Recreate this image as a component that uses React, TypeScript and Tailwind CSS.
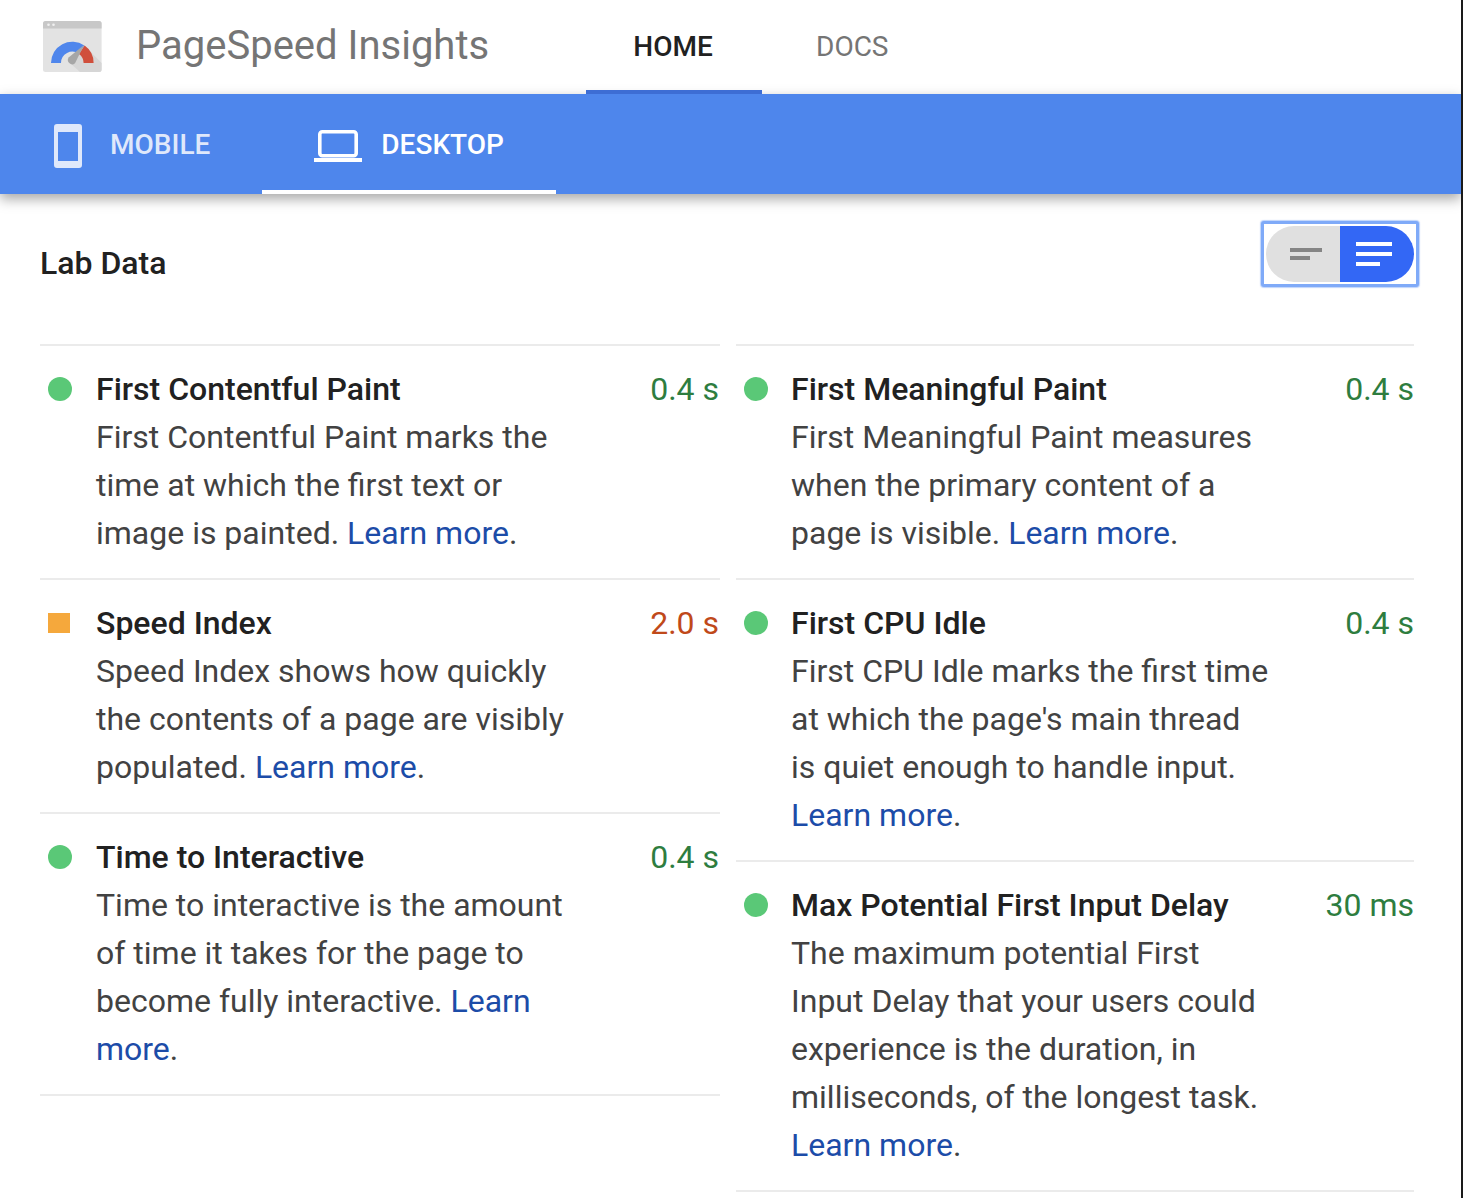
import React from 'react';

const FONT = 'font-[Roboto,"Liberation_Sans",sans-serif]';

type Status = 'pass' | 'average';

interface Metric {
  title: string;
  value: string;
  status: Status;
  lines: string[];
  // text before the link on the link's line, and link split over lines when needed
  linkPrefix?: string;
  linkParts: string[];
}

const LEFT: Metric[] = [
  {
    title: 'First Contentful Paint',
    value: '0.4 s',
    status: 'pass',
    lines: ['First Contentful Paint marks the', 'time at which the first text or'],
    linkPrefix: 'image is painted. ',
    linkParts: ['Learn more'],
  },
  {
    title: 'Speed Index',
    value: '2.0 s',
    status: 'average',
    lines: ['Speed Index shows how quickly', 'the contents of a page are visibly'],
    linkPrefix: 'populated. ',
    linkParts: ['Learn more'],
  },
  {
    title: 'Time to Interactive',
    value: '0.4 s',
    status: 'pass',
    lines: ['Time to interactive is the amount', 'of time it takes for the page to'],
    linkPrefix: 'become fully interactive. ',
    linkParts: ['Learn', 'more'],
  },
];

const RIGHT: Metric[] = [
  {
    title: 'First Meaningful Paint',
    value: '0.4 s',
    status: 'pass',
    lines: ['First Meaningful Paint measures', 'when the primary content of a'],
    linkPrefix: 'page is visible. ',
    linkParts: ['Learn more'],
  },
  {
    title: 'First CPU Idle',
    value: '0.4 s',
    status: 'pass',
    lines: [
      'First CPU Idle marks the first time',
      "at which the page's main thread",
      'is quiet enough to handle input.',
    ],
    linkParts: ['Learn more'],
  },
  {
    title: 'Max Potential First Input Delay',
    value: '30 ms',
    status: 'pass',
    lines: [
      'The maximum potential First',
      'Input Delay that your users could',
      'experience is the duration, in',
      'milliseconds, of the longest task.',
    ],
    linkParts: ['Learn more'],
  },
];

function Logo() {
  return (
    <svg width="59" height="51" viewBox="0 0 59 51" className="mb-[1px] shrink-0">
      <rect x="0" y="0" width="58.600" height="51" rx="2.500" fill="#e3e3e3" />
      <path d="M2.500 0h53.600a2.500 2.500 0 0 1 2.500 2.500V7.600H0V2.500A2.500 2.500 0 0 1 2.500 0z" fill="#c8c8c8" />
      <circle cx="5.500" cy="3.800" r="1.300" fill="#f1f1f1" />
      <circle cx="10.500" cy="3.800" r="1.300" fill="#f1f1f1" />
      <path d="M41 24L58.600 42V48.500A2.500 2.500 0 0 1 56.100 51H37L27 42z" fill="#d6d6d6" />
      <path d="M8 42A21.300 21.300 0 0 1 41.300 24.400L35.700 32.700A11.300 11.300 0 0 0 18 42z" fill="#4f86ec" />
      <path d="M41.600 24.600A21.300 21.300 0 0 1 50.600 42H40.600A11.300 11.300 0 0 0 36 32.900z" fill="#d04f3c" />
      <path d="M41 24L25.900 36.300a4.300 4.300 0 0 0 6.100 6z" fill="#a6a6a6" />
    </svg>
  );
}

function MobileIcon() {
  return (
    <svg width="28" height="44" viewBox="0 0 28 44" className="mt-[2px]">
      <path
        fillRule="evenodd"
        d="M3 0h22a3 3 0 0 1 3 3v38a3 3 0 0 1-3 3H3a3 3 0 0 1-3-3V3a3 3 0 0 1 3-3zm1 8v29h20V8z"
        fill="#dfe8fb"
      />
    </svg>
  );
}

function LaptopIcon() {
  return (
    <svg width="48" height="32" viewBox="0 0 48 32" className="mt-[2px]">
      <rect x="5.800" y="1.800" width="36.400" height="24" rx="2.500" fill="none" stroke="#fff" strokeWidth="3.600" />
      <rect x="0" y="28" width="48" height="4" fill="#fff" />
    </svg>
  );
}

function ViewToggle() {
  return (
    <div className="my-[1px] mr-[2px] flex h-[66px] w-[158px] items-center justify-center rounded-[3px] border-[3px] border-[#7faaf8] bg-white shadow-[0_0_1px_1px_rgba(127,170,248,0.5)]">
      <div className="flex h-[56px] w-[148px] shrink-0 overflow-hidden rounded-full">
        <div className="flex w-[74px] flex-col items-center justify-center gap-[4px] bg-[#e0e0e0] pl-[6px]">
          <span className="block h-[4px] w-[32px] bg-[#858585]" />
          <span className="mr-[12px] block h-[4px] w-[20px] bg-[#858585]" />
        </div>
        <div className="flex w-[74px] flex-col items-start justify-center gap-[6px] bg-[#3367f5] pl-[16px]">
          <span className="block h-[4px] w-[36px] bg-white" />
          <span className="block h-[4px] w-[36px] bg-white" />
          <span className="block h-[4px] w-[24px] bg-white" />
        </div>
      </div>
    </div>
  );
}

function MetricRow({ metric, indent, valueClass }: { metric: Metric; indent: string; valueClass: string }) {
  const valueColor = metric.status === 'pass' ? 'text-[#2e7d3f]' : 'text-[#c0491a]';
  const last = metric.linkParts.length - 1;
  return (
    <div className="flex border-b-2 border-[#ebebeb] pb-[21px] pt-[19px]">
      <div className={`flex h-[48px] ${indent} shrink-0 items-center pl-[8px]`}>
        {metric.status === 'pass' ? (
          <span className="block h-[24px] w-[24px] rounded-full bg-[#5ac877]" />
        ) : (
          <span className="block h-[20px] w-[22px] bg-[#f5a83c]" />
        )}
      </div>
      <div className="min-w-0 flex-1 text-[32px] leading-[48px]">
        <div className="flex justify-between">
          <span className="whitespace-nowrap font-medium text-[#212121]">{metric.title}</span>
          <span className={`${valueColor} ${valueClass} whitespace-nowrap text-right`}>{metric.value}</span>
        </div>
        <div className="whitespace-nowrap text-[#424242]">
          {metric.lines.map((line) => (
            <div key={line}>{line}</div>
          ))}
          {metric.linkParts.map((part, i) => (
            <div key={part}>
              {i === 0 && metric.linkPrefix}
              <span className="text-[#1c4ca8]">{part}</span>
              {i === last && '.'}
            </div>
          ))}
        </div>
      </div>
    </div>
  );
}

export default function App() {
  return (
    <div className={`${FONT} h-[1198px] w-[1463px] overflow-hidden border-r-2 border-[#1a1a1a] bg-white`}>
      <header className="flex h-[94px] items-center pl-[43px]">
        <Logo />
        <span className="mb-[3px] ml-[34px] w-[450px] text-[40px] leading-none text-[#757575]">PageSpeed Insights</span>
        <nav className="flex h-full text-[28px] font-medium">
          <div className="flex h-full w-[176px] items-center justify-center border-b-4 border-[#3d6dd4] pr-[2px] pt-[4px] text-[#212121]">
            HOME
          </div>
          <div className="ml-[54px] flex h-full items-center font-normal text-[#757575]">DOCS</div>
        </nav>
      </header>

      <div className="flex h-[100px] bg-[#4e86ec] pl-[54px] text-[28px] font-medium shadow-[0_5px_12px_rgba(0,0,0,0.35)]">
        <div className="flex items-center pt-[2px] text-[#dfe8fb]">
          <MobileIcon />
          <span className="ml-[28px]">MOBILE</span>
        </div>
        <div className="ml-[52px] flex w-[294px] items-center border-b-4 border-white pl-[52px] pt-[6px] text-white">
          <LaptopIcon />
          <span className="ml-[19px]">DESKTOP</span>
        </div>
      </div>

      <div className="flex items-center justify-between px-[40px] pt-[26px]">
        <span className="pt-[18px] text-[32px] font-medium text-[#212121]">Lab Data</span>
        <ViewToggle />
      </div>

      <div className="mt-[56px] flex gap-[16px] pl-[40px]">
        <div className="w-[680px] border-t-2 border-[#ebebeb]">
          {LEFT.map((m) => (
            <MetricRow key={m.title} metric={m} indent="w-[56px]" valueClass="mr-[1px]" />
          ))}
        </div>
        <div className="w-[678px] border-t-2 border-[#ebebeb]">
          {RIGHT.map((m) => (
            <MetricRow key={m.title} metric={m} indent="w-[55px]" valueClass="" />
          ))}
        </div>
      </div>
    </div>
  );
}
